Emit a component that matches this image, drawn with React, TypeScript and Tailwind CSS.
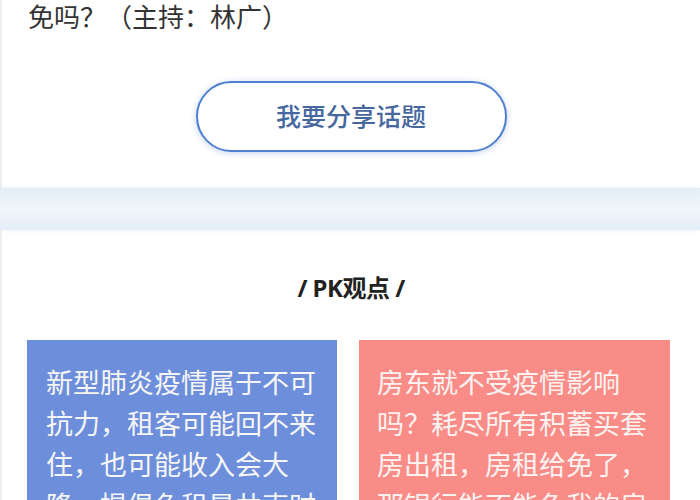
import React from 'react';

const font = { fontFamily: '"Noto Sans", "Noto Sans CJK SC", sans-serif' };

const App: React.FC = () => {
  return (
    <div className="w-[700px] h-[500px] overflow-hidden bg-white" style={font}>
      {/* Topic tail + share button */}
      <section className="border-l-2 border-[#efefef] pb-[36px]">
        <p className="pl-[26px] text-[26px] leading-[34px] text-[#333]">免吗？（主持：林广）</p>
        <div className="mt-[47px] flex justify-center">
          <button className="w-[311px] h-[71px] rounded-full border-2 border-[#4f7fd0] bg-white text-[25px] font-medium text-[#46689f] shadow-[0_1px_6px_rgba(79,127,208,0.35)]">
            我要分享话题
          </button>
        </div>
      </section>

      {/* Divider band */}
      <div className="h-[42px] bg-gradient-to-b from-[#e4eef7] via-[#f1f5f9] to-[#e4eef7] shadow-[0_0_5px_rgba(215,230,245,0.6)]" />

      {/* PK section */}
      <section className="border-l-2 border-[#efefef] pt-[42px]">
        <h2 className="text-center text-[24px] leading-[32px] font-bold tracking-[-0.5px] text-[#222]">/ PK观点 /</h2>
        <div className="mt-[36px] flex gap-[22px] pl-[25px] pr-[28px]">
          <div className="w-[310px] h-[200px] bg-[#6d8fdb] pl-[19px] pr-[18px] pt-[22px] text-[27px] leading-[41px] text-[#f6f6f6]">
            新型肺炎疫情属于不可抗力，租客可能回不来住，也可能收入会大降，提倡免租是共克时艰
          </div>
          <div className="w-[311px] h-[200px] bg-[#f98c87] pl-[18px] pr-[18px] pt-[22px] text-[27px] leading-[41px] text-[#fbf3f2]">
            房东就不受疫情影响吗？耗尽所有积蓄买套房出租，房租给免了，那银行能不能免我的房贷
          </div>
        </div>
      </section>
    </div>
  );
};

export default App;
